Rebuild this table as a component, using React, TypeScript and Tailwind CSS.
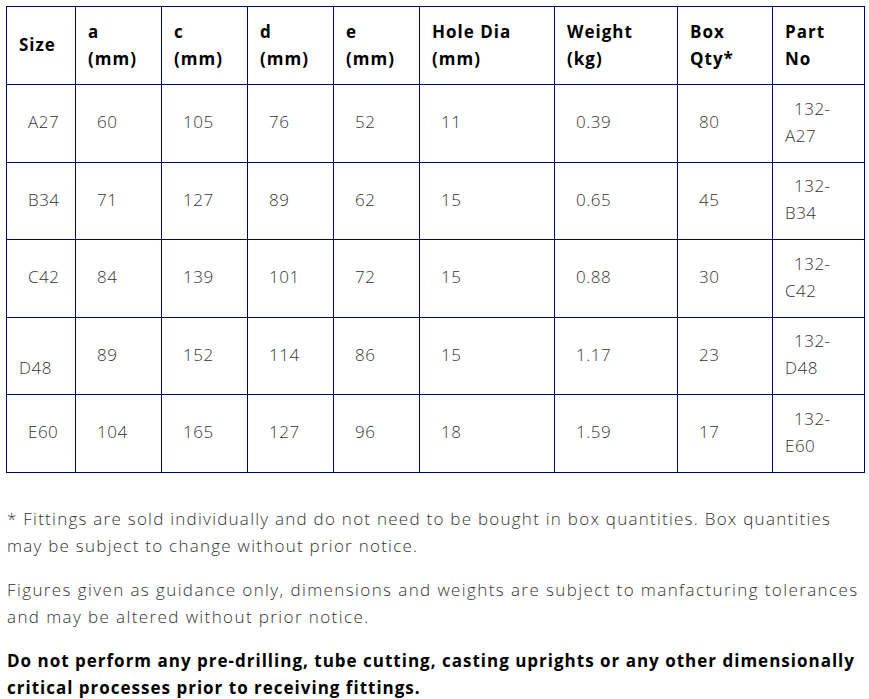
import React from "react";

const cols = [69, 86, 86, 86, 86, 135, 123, 95, 92];

const headers: string[][] = [
  ["Size"],
  ["a", "(mm)"],
  ["c", "(mm)"],
  ["d", "(mm)"],
  ["e", "(mm)"],
  ["Hole Dia", "(mm)"],
  ["Weight", "(kg)"],
  ["Box", "Qty*"],
  ["Part", "No"],
];

type Row = { size: string; sizeBreak?: boolean; vals: string[]; part: string };

const rows: Row[] = [
  { size: "A27", vals: ["60", "105", "76", "52", "11", "0.39", "80"], part: "A27" },
  { size: "B34", vals: ["71", "127", "89", "62", "15", "0.65", "45"], part: "B34" },
  { size: "C42", vals: ["84", "139", "101", "72", "15", "0.88", "30"], part: "C42" },
  { size: "D48", sizeBreak: true, vals: ["89", "152", "114", "86", "15", "1.17", "23"], part: "D48" },
  { size: "E60", vals: ["104", "165", "127", "96", "18", "1.59", "17"], part: "E60" },
];

export default function App() {
  return (
    <div
      className="bg-white px-[6px] pt-[6px] text-[17px] leading-[27px] text-[#333333]"
      style={{ fontFamily: '"Open Sans", "Liberation Sans", sans-serif' }}
    >
      <table className="table-fixed border-collapse w-[859px]">
        <colgroup>
          {cols.map((w, i) => (
            <col key={i} style={{ width: w }} />
          ))}
        </colgroup>
        <thead>
          <tr className="h-[78px]">
            {headers.map((h, i) => (
              <th
                key={i}
                className="border border-[#000066] pl-[12px] pr-[2px] pb-[2px] text-left align-middle font-bold tracking-[1px] text-black"
              >
                {h.map((l, j) => (
                  <div key={j} className="whitespace-nowrap">{l}</div>
                ))}
              </th>
            ))}
          </tr>
        </thead>
        <tbody>
          {rows.map((r, ri) => (
            <tr key={ri} className="h-[77.5px]">
              <td className="border border-[#000066] pl-[12px] pb-[3px] align-middle font-light tracking-[0.5px]">
                {r.sizeBreak ? (
                  <>
                    <div>&nbsp;</div>
                    <div>{r.size}</div>
                  </>
                ) : (
                  <div className="pl-[9px]">{r.size}</div>
                )}
              </td>
              {r.vals.map((v, vi) => (
                <td key={vi} className="border border-[#000066] pl-[12px] pb-[3px] align-middle font-light tracking-[0.5px]">
                  <div className="pl-[9px]">{v}</div>
                </td>
              ))}
              <td className="border border-[#000066] pl-[12px] pb-[3px] align-middle font-light tracking-[0.5px]">
                <div className="pl-[9px]">132-</div>
                <div>{r.part}</div>
              </td>
            </tr>
          ))}
        </tbody>
      </table>
      <div className="pt-[32px] pl-px">
        <p className="font-light tracking-[1.25px] whitespace-nowrap">
          * Fittings are sold individually and do not need to be bought in box quantities. Box quantities
          <br />
          may be subject to change without prior notice.
        </p>
        <p className="mt-[17px] font-light tracking-[1.4px] whitespace-nowrap">
          Figures given as guidance only, dimensions and weights are subject to manfacturing tolerances
          <br />
          and may be altered without prior notice.
        </p>
        <p className="mt-[17px] font-bold text-black tracking-[1px] whitespace-nowrap">
          Do not perform any pre-drilling, tube cutting, casting uprights or any other dimensionally
          <br />
          critical processes prior to receiving fittings.
        </p>
      </div>
    </div>
  );
}
